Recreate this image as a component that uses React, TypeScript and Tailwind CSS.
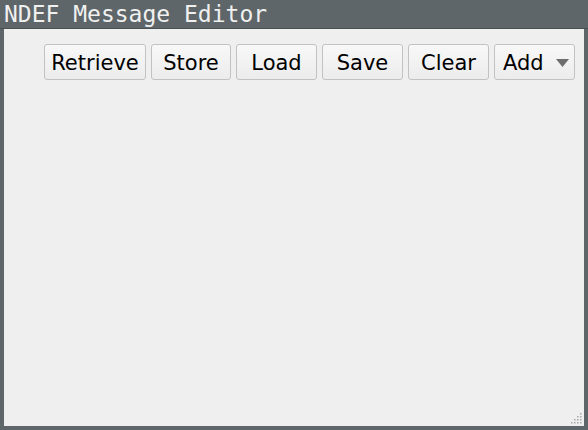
const buttons = [
  { label: "Retrieve", width: "w-[102px]" },
  { label: "Store", width: "w-[80px]" },
  { label: "Load", width: "w-[81px]" },
  { label: "Save", width: "w-[81px]" },
  { label: "Clear", width: "w-[81px]" },
];

function ToolButton({ label, width }: { label: string; width: string }) {
  return (
    <button className={`${width} h-[36px] pt-[2px] rounded-[3px] border border-[#c2c2c2] bg-gradient-to-b from-[#f8f8f8] to-[#ececec] text-[21px] text-black leading-none`}>
      {label}
    </button>
  );
}

function ResizeGrip() {
  const dots: [number, number][] = [];
  for (let row = 0; row < 4; row++) {
    for (let col = 3 - row; col < 4; col++) {
      dots.push([col * 3, row * 3]);
    }
  }
  return (
    <svg className="absolute right-[2px] bottom-[2px]" width="11" height="11" viewBox="0 0 11 11">
      {dots.map(([x, y], i) => (
        <rect key={i} x={x} y={y} width="1.5" height="1.5" fill="#a8a8a8" />
      ))}
    </svg>
  );
}

export default function App() {
  return (
    <div className="w-[588px] h-[430px] bg-[#5e6669] flex flex-col font-['DejaVu_Sans',sans-serif]">
      <div className="h-[28px] px-[4px] flex items-center text-[23px] text-[#f0f0f0] font-['DejaVu_Sans_Mono',monospace] leading-none">
        NDEF Message Editor
      </div>
      <div className="h-[1px] bg-[#4a5153]" />
      <div className="relative mx-[4px] h-[397px] bg-[#efefef]">
        <div className="flex justify-end gap-[5px] pt-[15px] pr-[9px]">
          {buttons.map((b) => (
            <ToolButton key={b.label} label={b.label} width={b.width} />
          ))}
          <button className="w-[81px] h-[36px] pt-[2px] rounded-[3px] border border-[#c2c2c2] bg-gradient-to-b from-[#f8f8f8] to-[#ececec] text-[21px] text-black leading-none flex items-center pl-[8px] pr-[5px]">
            <span>Add</span>
            <svg className="ml-auto" width="13" height="8" viewBox="0 0 13 8">
              <polygon points="0,0 13,0 6.5,8" fill="#6d6d6d" />
            </svg>
          </button>
        </div>
        <ResizeGrip />
      </div>
    </div>
  );
}
